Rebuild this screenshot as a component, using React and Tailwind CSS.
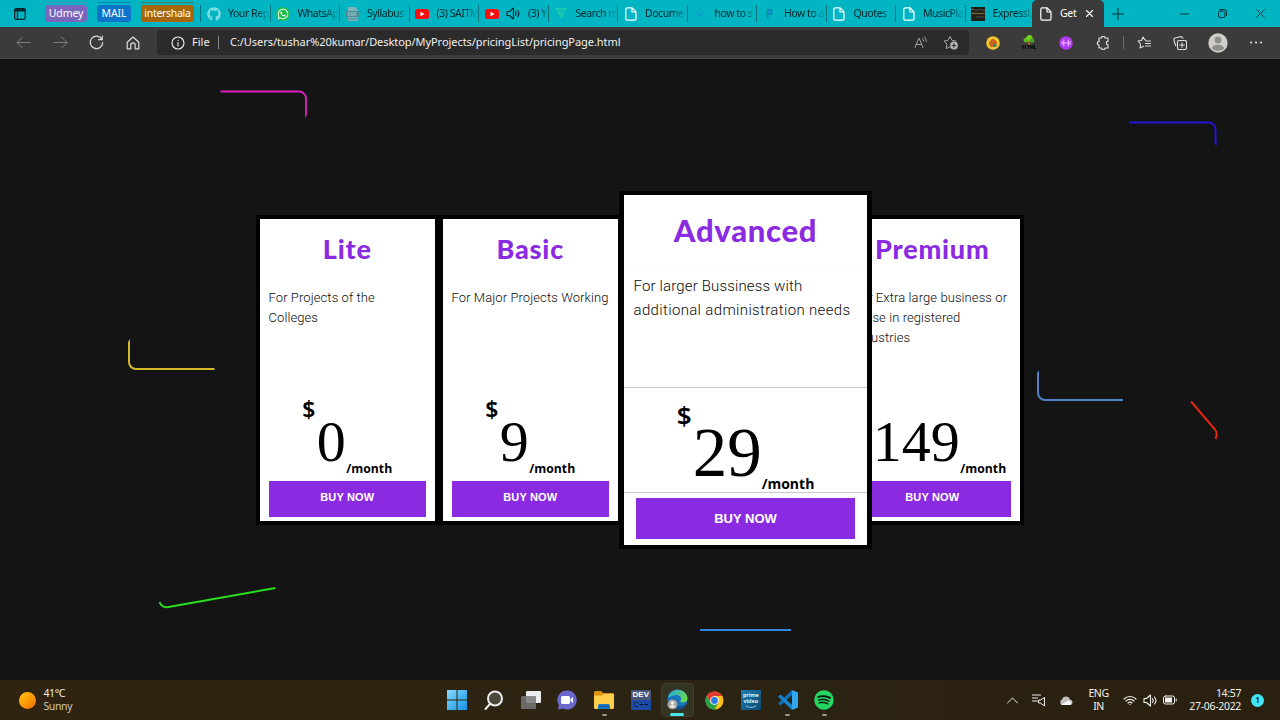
import React from "react";
import { FaGithub, FaWhatsapp, FaSpotify } from "react-icons/fa";

const ui = "font-['Noto_Sans','Open_Sans',sans-serif]";

function Svg({ w = 16, h = w, box, className = "", children, sw = 1 }) {
  return (
    <svg
      width={w}
      height={h}
      viewBox={box || `0 0 ${w} ${h}`}
      fill="none"
      stroke="currentColor"
      strokeWidth={sw}
      strokeLinecap="round"
      strokeLinejoin="round"
      className={`block shrink-0 ${className}`}
    >
      {children}
    </svg>
  );
}

const Page = () => (
  <Svg w={12} h={14} sw={1.2} className="text-white">
    <path d="M2.2.8h5l3.8 4v7a1.4 1.4 0 0 1-1.4 1.4H2.2A1.4 1.4 0 0 1 .8 11.800V2.200A1.400 1.400 0 0 1 2.200.8zM7 1v4h4" />
  </Svg>
);
const YouTube = () => (
  <Svg w={14} h={10} className="text-transparent">
    <rect width="14" height="10" rx="2.500" fill="#f50f0f" />
    <path d="M5.500 2.800v4.400L9.500 5z" fill="#fff" />
  </Svg>
);
const Pdf = () => (
  <Svg w={13} h={14} className="text-transparent">
    <path d="M2 0h7l3 3v11H2z" fill="#7fb2ba" />
    <rect y="4" width="13" height="6" fill="#4a8b95" />
    <path d="M2 6h9M2 8h9" stroke="#a8d4d9" strokeDasharray="2 1" />
    <path d="M3 12h8" stroke="#3c8590" />
  </Svg>
);
const Triangle = () => (
  <Svg w={12} h={11} className="text-transparent">
    <path d="M0 0h12L6 11z" fill="#19c9ae" />
    <path d="M2 3h8M7 4 4.500 7.500" stroke="#03b3bc" />
  </Svg>
);
const Magnifier = () => (
  <Svg w={9} sw={1.500} className="text-[#0aa0cc]">
    <circle cx="3.500" cy="3.500" r="2.600" />
    <path d="m5.600 5.600 2.400 2.400" />
  </Svg>
);
const Photo = () => (
  <Svg w={14} className="text-transparent">
    <rect width="14" height="14" fill="#1f1d17" />
    <path d="M1 6.500h12" stroke="#6d6038" strokeWidth="1.600" />
    <path d="M0 2.500h3l2 1 3-1 6 1" stroke="#56564b" />
    <path d="M5 10h7" stroke="#45443c" strokeWidth="1.500" />
  </Svg>
);
const Speaker = ({ className = "" }) => (
  <Svg w={15} h={13} sw={1.100} className={className}>
    <path d="M1 4.500h2.500l4-3.500v11l-4-3.500H1zM9.500 4.700a3 3 0 0 1 0 3.600M11.500 3a5.500 5.500 0 0 1 0 7" />
  </Svg>
);

const tabs = [
  { icon: <FaGithub size={14} className="text-[#7fdde2]" />, label: "Your Rep" },
  { icon: <span className="flex size-[14px] items-center justify-center rounded-full bg-[#19bf4a] text-white"><FaWhatsapp size={12} /></span>, label: "WhatsAp" },
  { icon: <Pdf />, label: "Syllabus" },
  { icon: <YouTube />, label: "(3) SAITM" },
  { icon: <YouTube />, extra: true, label: "(3) Y" },
  { icon: <Triangle />, label: "Search re" },
  { icon: <Page />, label: "Docume" },
  { icon: <Magnifier />, label: "how to s" },
  { icon: <span className="text-[12px] font-bold text-[#0b86b5]">P</span>, label: "How to a" },
  { icon: <Page />, label: "Quotes" },
  { icon: <Page />, label: "MusicPla" },
  { icon: <Photo />, label: "ExpressU" },
];

function TabBar() {
  return (
    <div className={`flex h-[27px] w-full items-center bg-[#02b5c3] text-[10.500px] text-[#05262b] ${ui}`}>
      <div className="flex w-[45px] pl-[14px]">
        <Svg w={12} sw={1.300}>
          <rect x=".7" y=".7" width="10.600" height="10.600" rx="1.500" />
          <path d="M1 2.300h10" strokeWidth="2.400" />
          <path d="M3.500 4v7" />
        </Svg>
      </div>
      <div className="flex h-full w-[155px] items-start gap-[10px] pt-[2px] tracking-[-0.1px] text-white">
        <div className="w-[42px] border-t border-[#4f8fbd] pt-[2px]">
          <div className="h-[17px] rounded-[3px] bg-[#7a66bd] text-center leading-[16px]">Udmey</div>
        </div>
        <div className="w-[34px] border-t border-[#067fc4] pt-[2px]">
          <div className="h-[17px] rounded-[3px] bg-[#0d74c9] text-center leading-[16px]">MAIL</div>
        </div>
        <div className="w-[53px] border-t border-[#53794b] pt-[2px]">
          <div className="h-[17px] rounded-[3px] bg-[#a6670a] text-center leading-[16px] tracking-[-0.3px]">intershala</div>
        </div>
      </div>
      {tabs.map((t, i) => (
        <div key={i} className="flex w-[69.500px] shrink-0 items-center">
          <div className="h-[17px] w-px shrink-0 bg-[#0a747d]" />
          <div className="ml-[5px] flex w-[15px] shrink-0 justify-center">{t.icon}</div>
          {t.extra && <Speaker className="ml-[7px]" />}
          <div className="ml-[7px] min-w-0 flex-1 overflow-hidden whitespace-nowrap tracking-[-0.45px] [mask-image:linear-gradient(to_right,black_65%,transparent_100%)]">
            {t.label}
          </div>
        </div>
      ))}
      <div className="-ml-[2px] flex h-full w-[72px] shrink-0 items-center rounded-t-[5px] bg-[#3b3b3b] pl-[8px] text-white">
        <Page />
        <span className="ml-[8px] w-[26px] tracking-[-0.3px]">Get</span>
        <Svg w={7} h={7} sw={1.100}><path d="m.5.5 6 6m0-6-6 6" /></Svg>
      </div>
      <div className="flex flex-1 items-center text-[#06343a]">
        <Svg w={12} sw={1.100} className="ml-[8px]"><path d="M6 .5v11M.5 6h11" /></Svg>
        <Svg w={9} h={2} className="ml-[56px]"><path d="M.5 1h8" /></Svg>
        <Svg w={9} className="ml-[29px]"><rect x=".5" y="2" width="6.500" height="6.500" rx="1.500" /><path d="M2.500.5h4a2 2 0 0 1 2 2v4" /></Svg>
        <Svg w={9} className="ml-[29px]"><path d="m.5.5 8 8m0-8-8 8" /></Svg>
      </div>
    </div>
  );
}

function Toolbar() {
  return (
    <div className={`flex h-8 w-full items-center border-b border-[#484848] bg-[#3b3b3b] text-[#dedede] ${ui}`}>
      <div className="flex w-[157px] items-center pl-[16px]">
        <Svg w={15} h={13} className="text-[#7e7e7e]"><path d="M14 6.500H1.200M6.500 1 1 6.500 6.500 12" /></Svg>
        <Svg w={15} h={13} className="ml-[22px] text-[#7e7e7e]"><path d="M1 6.500h12.800M8.500 1 14 6.500 8.500 12" /></Svg>
        <Svg w={15} h={15} sw={1.200} className="ml-[21px]"><path d="M13 4.500A6.200 6.200 0 1 0 13.700 7.500M13.200 1v3.700H9.500" /></Svg>
        <Svg w={14} h={14} sw={1.200} className="ml-[22px]"><path d="M1.200 6.300 7 1l5.800 5.300v6.500H9.200V9a2.200 2.200 0 0 0-4.400 0v3.800H1.200z" /></Svg>
      </div>
      <div className="flex h-[25px] w-[812px] items-center rounded-[3px] bg-[#2b2b2b] text-[11px] whitespace-nowrap text-[#f0f0f0]">
        <Svg w={14} sw={1.100} className="ml-[14px]"><circle cx="7" cy="7" r="6" /><path d="M7 6.500v3.500M7 4.200v.2" /></Svg>
        <span className="ml-[7px] w-[26px]">File</span>
        <span className="h-[13px] w-px bg-[#8a8a8a]" />
        <span className="ml-[11px] flex-1 tracking-[-0.055px]">C:/Users/tushar%20kumar/Desktop/MyProjects/pricingList/pricingPage.html</span>
        <Svg w={14} h={13} className="mr-[15px] text-[#a2a2a2]"><path d="M1 11.500 5 2l4 9.500M2.300 8.500h5.400M8.500 2.500a3 3 0 0 1 1 2.500M10.500.8a5 5 0 0 1 1.800 4.500" /></Svg>
        <Svg w={16} h={15} className="mr-[10px] text-[#a2a2a2]"><path d="M7 12 3.200 13.500 4 9 1 6l4-.6L7 1.500l2 3.900 4 .6" /><circle cx="11" cy="10.500" r="3.900" fill="#b5b5b5" stroke="none" /><path d="M11 8.700v3.600m-1.800-1.800h3.600" stroke="#2b2b2b" /></Svg>
      </div>
      <Svg w={14} className="ml-[16.500px]"><circle cx="7" cy="7" r="6.800" fill="#f3c530" stroke="none" /><path d="M3.300 9C2.500 6.500 3.500 4.500 5 4.500 5.500 2.500 8 2 8.500 4c2 0 3 2.500 2 5l-2.500 2H5z" fill="#c9651f" stroke="none" /><circle cx="9" cy="9.500" r="1.600" fill="#248e62" stroke="none" /></Svg>
      <Svg w={14} h={15} className="ml-[22px]"><path d="M6.200 6h1.800l.5 5h-3z" fill="#956127" stroke="none" /><circle cx="4" cy="5" r="2.500" fill="#58b816" stroke="none" /><circle cx="7.500" cy="3" r="3" fill="#75cf1f" stroke="none" /><circle cx="10" cy="5.500" r="2.300" fill="#4aa717" stroke="none" /><path d="M1 10.500v3m2.500-3v3M1 12h2.500m1.500-1.500h3m-1.500 0v3m2 0v-3l1.200 2 1.200-2v3m1.500-3v3H14" stroke="#080808" /></Svg>
      <Svg w={14} className="ml-[23px]"><circle cx="7" cy="7" r="6.800" fill="#ad37ee" stroke="none" /><path d="M4.800 4v6m4.400-6v6M4.800 7h4.400M3 5.500v3m8-3v3" stroke="#f3c5ff" /></Svg>
      <Svg w={14} sw={1.200} className="ml-[23px]"><path d="M3 2h2.500a1.700 1.700 0 0 1 3.400 0H12v3.400a1.700 1.700 0 0 0 0 3.400V12H9a1.700 1.700 0 0 1-3.400 0H3V9a1.700 1.700 0 1 1 0-3.400z" /></Svg>
      <span className="ml-[13px] h-[13px] w-px bg-[#6a6a6a]" />
      <Svg w={14} h={13} className="ml-[13px]" sw={1.100}><path d="M8.500 4.500 6 1 4.500 4.500 1 5l2.500 3L3 12l3.500-1.800M9 5h4.500M8.500 7.500h5M8.500 10h5" /></Svg>
      <Svg w={14} className="ml-[22.500px]" sw={1.100}><rect x="4.500" y="4.500" width="9" height="9" rx="1.500" /><path d="M9 6.800v4.400M6.800 9h4.400M2.800 9.800 1 4.500A2 2 0 0 1 2 2l6-1.500 2 1.700" /></Svg>
      <Svg w={20} className="ml-[21px]"><circle cx="10" cy="10" r="9.700" fill="#d0cecb" stroke="none" /><circle cx="10" cy="7" r="3.400" fill="#8f8d8a" stroke="none" /><path d="M4 15.500c0-5 12-5 12 0-3 3-9 3-12 0z" fill="#8f8d8a" stroke="none" /></Svg>
      <Svg w={12} h={3} className="ml-[22px]"><path d="M1 1.500h.2M6 1.500h.2M11 1.500h.2" strokeWidth="1.900" /></Svg>
    </div>
  );
}

function Decor() {
  return (
    <svg className="absolute inset-0" width="1280" height="621" viewBox="0 59 1280 621" fill="none" strokeWidth="2">
      <path d="M220.500 91.500H299a7 7 0 0 1 7 7V115" stroke="#df20c0" strokeWidth="1.800" />
      <path d="m305.100 114 1.800 0-1.800 5z" fill="#df20c0" />
      <path d="M1129 122.500h79a7 7 0 0 1 7.500 7V144" stroke="#2514d4" />
      <path d="m1214.500 143 2 0v4z" fill="#2514d4" />
      <path d="M129 343v19a7 7 0 0 0 7 7h78.500" stroke="#d6b82c" />
      <path d="M128 344v-2l2-3v5z" fill="#d6b82c" />
      <path d="M1038 374v19a7 7 0 0 0 7 7h78" stroke="#5081c9" />
      <path d="M1037 375v-2l2-3v5z" fill="#5081c9" />
      <path d="m1191 401.500 24 28q3 4 .5 9.500" stroke="#e2260f" />
      <path d="M159.500 602q2 6 9 5L275.500 588" stroke="#29df1d" />
      <path d="M700 630h91" stroke="#3284dd" />
    </svg>
  );
}

function Card({ name, children, amount }) {
  return (
    <div className="flex h-[310px] w-[183px] shrink-0 flex-col border-4 border-black bg-white pr-[9px] pl-[8.500px]">
      <h2 className="-mx-2 mt-[12px] h-[57px] text-center font-['Lato',sans-serif] text-[27px] leading-[36px] font-black tracking-[0.8px] whitespace-nowrap text-[#8a2be2]">{name}</h2>
      <p className="h-[110px] font-['Roboto',sans-serif] text-[13px] leading-[20px] font-light tracking-[0.090px] whitespace-nowrap text-[#0c0c0c]">{children}</p>
      <div className="flex h-[82.500px] justify-center text-black">
        <span className="w-[14.500px] font-['Noto_Sans',sans-serif] text-[23px] leading-[23px] font-semibold">$</span>
        <span className="pt-[16px] font-['Liberation_Serif',serif] text-[58px] leading-[56px]">{amount}</span>
        <span className="pt-[61.500px] pl-[0.500px] font-['Open_Sans',sans-serif] text-[12.200px] leading-[18px] font-bold">/month</span>
      </div>
      <button className="h-[36px] bg-[#8a2be2] pb-[2px] font-['Liberation_Sans',sans-serif] text-[11px] font-bold tracking-[0.15px] text-white">BUY NOW</button>
    </div>
  );
}

function FeaturedCard() {
  return (
    <div className="z-10 -ml-[3px] flex h-[358px] w-[253px] shrink-0 flex-col border-x-[5px] border-y-4 border-black bg-white">
      <h2 className="h-[71px] border-b border-[#f7f7f7] pt-[14px] text-center font-['Lato',sans-serif] text-[31px] leading-[42px] font-black tracking-[0.700px] text-[#8a2be2]">Advanced</h2>
      <p className="h-[122px] border-b border-[#c8c8c8] pt-[9px] pl-[9.500px] font-['Roboto',sans-serif] text-[15px] leading-[23.500px] font-light tracking-[0.35px] whitespace-nowrap text-[#0c0c0c]">
        <span className="block tracking-[0.150px]">For larger Bussiness with</span>
        <span className="block">additional administration needs</span>
      </p>
      <div className="flex h-[105px] justify-center border-b border-[#c8c8c8] text-black">
        <span className="w-[16px] pt-[14px] font-['Noto_Sans',sans-serif] text-[26px] leading-[26px] font-semibold">$</span>
        <span className="pt-[34px] font-['Liberation_Serif',serif] text-[69px] leading-[63px]">29</span>
        <span className="pt-[86px] font-['Open_Sans',sans-serif] text-[14px] leading-[20px] font-bold">/month</span>
      </div>
      <button className="mx-[12px] mt-[5px] h-[41px] bg-[#8a2be2] font-['Liberation_Sans',sans-serif] text-[13px] font-bold text-white">BUY NOW</button>
    </div>
  );
}

const Blank = () => <span className="block h-[2px] w-[5px]" />;
const Dot = () => <span className="block h-[2px] w-[5px] rounded-full bg-[#9a9892]" />;

function TaskIcon({ children, mark = <Blank />, active }) {
  return (
    <div className="flex w-[36.700px] shrink-0 justify-center">
      <div className={`flex h-[34px] w-[33px] flex-col items-center justify-end rounded-[4px] ${active ? "border border-[#403e2e] bg-[#353323]" : "border border-transparent"}`}>
        <div className="flex h-[22px] items-center">{children}</div>
        <div className="mt-[3px]">{mark}</div>
      </div>
    </div>
  );
}

function Taskbar() {
  return (
    <div className={`flex h-10 w-full items-center bg-linear-to-r from-[#30230f] via-[#2c2413] to-[#29200f] text-[10.500px] text-[#f2f0ec] ${ui}`}>
      <div className="flex w-[439px] shrink-0 items-center pl-[18.500px]">
        <span className="size-[17px] rounded-full bg-linear-to-br from-[#ffc70e] to-[#ef6b04]" />
        <div className="ml-[8px] leading-[13px] tracking-[-0.4px]">
          <div>41°C</div>
          <div className="text-[#cdc8bd]">Sunny</div>
        </div>
      </div>
      <TaskIcon>
        <Svg w={20} className="text-transparent">
          <defs><linearGradient id="win" x1="0" y1="0" x2="1" y2="1"><stop stopColor="#83dcfb" /><stop offset="1" stopColor="#1592e8" /></linearGradient></defs>
          <path d="M0 0h9.500v9.500H0zM10.500 0H20v9.500h-9.500zM0 10.500h9.500V20H0zM10.500 10.500H20V20h-9.500z" fill="url(#win)" />
        </Svg>
      </TaskIcon>
      <TaskIcon><Svg w={20} sw={2} className="text-[#ececec]"><circle cx="11" cy="8.500" r="7" fill="#4c473b" /><path d="m6 14-4.500 5" /></Svg></TaskIcon>
      <TaskIcon><Svg w={20} h={18} className="text-transparent"><rect x="5" width="15" height="12" rx="1" fill="#ededed" /><rect y="5" width="15" height="13" rx="1" fill="#777" fillOpacity=".85" /></Svg></TaskIcon>
      <TaskIcon><Svg w={20} className="text-transparent"><path d="M10 .5a9.500 9.500 0 1 1-4 18L1 19.500 1.800 15A9.500 9.500 0 0 1 10 .5" fill="#6b68cd" /><rect x="4" y="6" width="9" height="8" rx="1.500" fill="#fff" /><path d="m13.500 9 2.500-2v6l-2.500-2z" fill="#fff" /></Svg></TaskIcon>
      <TaskIcon mark={<Dot />}><Svg w={20} h={18} className="text-transparent"><path d="M0 1.500Q0 0 1.500 0H7l2 2h9.500Q20 2 20 3.500V16H0z" fill="#dc9411" /><path d="M0 4.500h8L9.500 3H20v13.500q0 1.500-1.500 1.500h-17Q0 18 0 16.500z" fill="#fecd4b" /><path d="M4 18v-3.500q0-1.500 1.500-1.500h9q1.500 0 1.500 1.500V18z" fill="#1975bd" /><path d="M6 15.500h8" stroke="#0c569a" /></Svg></TaskIcon>
      <TaskIcon>
        <div className="flex size-[20px] flex-col items-center bg-[#1c4aa5] font-['Liberation_Sans',sans-serif] text-[8px] leading-[10px] font-bold text-white">
          <span className="w-full bg-[#4a5678] text-center">DEV</span><span className="text-[#0a173d] [text-shadow:0_0_1px_#3b8ff0]">C++</span>
        </div>
      </TaskIcon>
      <TaskIcon active mark={<span className="block h-[3px] w-[14px] rounded-full bg-[#48e4ea]" />}>
        <Svg w={21} className="text-transparent">
          <defs>
            <linearGradient id="edgeA" x1="0" y1="0" x2="1" y2=".5"><stop stopColor="#21a7e8" /><stop offset="1" stopColor="#68d952" /></linearGradient>
          </defs>
          <circle cx="10.500" cy="10.500" r="10" fill="#1673bf" />
          <path d="M1 8C4-3 20-1 20.500 9.500c0 4-5 5-7.500 3 3-3 0-7-4-6.500S1 9 1 8" fill="url(#edgeA)" />
          <path d="M8 10c-2 5 3 9 10 6-3 5-10 6-13 1S5 10 8 10" fill="#0d4f9d" />
          <circle cx="5.500" cy="15.500" r="5" fill="#aaa5a0" /><circle cx="5.500" cy="14" r="1.800" fill="#efefef" /><path d="M2.500 18.500c0-3.500 6-3.500 6 0" fill="#efefef" />
        </Svg>
      </TaskIcon>
      <TaskIcon>
        <Svg w={19} box="0 0 20 20" className="text-transparent">
          <circle cx="10" cy="10" r="9.500" fill="#fbc116" />
          <path d="M1.770 5.250A9.500 9.500 0 0 1 18.230 5.250H10L5.900 12.400z" fill="#e33b2e" />
          <path d="M1.770 5.250A9.500 9.500 0 0 0 10 19.500l4.100-7.100H5.900z" fill="#27a34a" />
          <circle cx="10" cy="10" r="4.600" fill="#fff" /><circle cx="10" cy="10" r="3.600" fill="#2b7be8" />
        </Svg>
      </TaskIcon>
      <TaskIcon>
        <div className="flex size-[20px] flex-col items-center bg-linear-to-br from-[#1a7fb0] to-[#0c486f] pt-[1.500px] text-[5.500px] leading-[6.500px] font-semibold text-white">
          <span>prime</span><span>video</span>
          <Svg w={12} h={4} className="text-[#8ac7e6]"><path d="M1 1q5 3 10 0" /></Svg>
        </div>
      </TaskIcon>
      <TaskIcon mark={<Dot />}>
        <Svg w={20} className="text-transparent">
          <path d="M14 0v5L2.500 15.500 0 13.500 14 0" fill="#0f70b8" /><path d="M0 6.500 2.500 4.500 14 15v5z" fill="#1686d2" /><path d="M14 0l6 2.500v15L14 20z" fill="#32a7ee" />
        </Svg>
      </TaskIcon>
      <TaskIcon mark={<Dot />}><span className="flex size-[19px] items-center justify-center rounded-full bg-[#101a10] text-[#26d664]"><FaSpotify size={20} className="shrink-0" /></span></TaskIcon>
      <div className="flex flex-1 items-center">
        <Svg w={11} h={7} className="ml-[164.500px]"><path d="m.5 6 5-5 5 5" /></Svg>
        <Svg w={14} h={13} className="ml-[14px]"><path d="M.5 1h8M.5 4h5M.5 7h5M7 6h1.500l4-2.500v8.500l-4-3H7z" /></Svg>
        <Svg w={14} h={9} className="ml-[13px] text-transparent"><path d="M3 9a3 3 0 0 1 0-5.500A4.200 4.200 0 0 1 11 3.500 2.800 2.800 0 0 1 11.500 9z" fill="#bfbfbf" /><path d="M2 8.800 9.500 4.500a3 3 0 0 1 2 4.500H3z" fill="#fff" /></Svg>
        <div className="ml-[13px] w-[25px] text-center leading-[13px] tracking-[-0.4px]"><div>ENG</div><div>IN</div></div>
        <Svg w={14} h={11} className="ml-[12px]" sw={1.100}><path d="M1 4a8.500 8.500 0 0 1 12 0M3 6a5.700 5.700 0 0 1 8 0M5 8a2.900 2.900 0 0 1 4 0M6.800 9.500h.4" /></Svg>
        <Speaker className="ml-[6px]" />
        <Svg w={14} h={10} className="ml-[5px]"><rect x=".5" y="1" width="11" height="8" rx="2" /><rect x="2" y="2.500" width="7" height="5" fill="currentColor" stroke="none" /><path d="M13.200 4v2" /></Svg>
        <div className="ml-[10px] w-[54px] text-right leading-[13px] tracking-[-0.350px] whitespace-nowrap"><div>14:57</div><div className="tracking-[-0.3px]">27-06-2022</div></div>
        <span className="ml-[10px] flex size-[13px] items-center justify-center rounded-full bg-[#40e6f3] text-[8px] font-semibold text-black">1</span>
      </div>
    </div>
  );
}

export default function App() {
  return (
    <div className="flex h-[720px] w-[1280px] flex-col overflow-hidden bg-[#141414]">
      <TabBar />
      <Toolbar />
      <main className="relative h-[621px] pt-[132px]">
        <Decor />
        <div className="relative flex h-[358px] items-center pl-[256px]">
          <Card name="Lite" amount="0">For Projects of the<br />Colleges</Card>
          <Card name="Basic" amount="9">For Major Projects Working</Card>
          <FeaturedCard />
          <div className="-ml-[31px]">
            <Card name="Premium" amount="149">For Extra large business or<br />those in registered<br />industries</Card>
          </div>
        </div>
      </main>
      <Taskbar />
    </div>
  );
}
